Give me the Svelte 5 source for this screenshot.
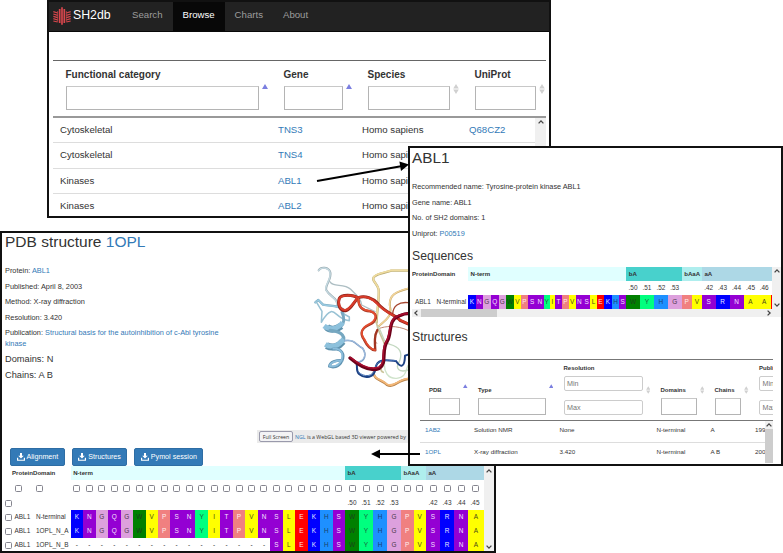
<script>
  const palette = {
    K: ['#0000ff', '#e4e8ff'], R: ['#0000ff', '#e4e8ff'],
    N: ['#9400d3', '#f6e2ff'], Q: ['#9400d3', '#f6e2ff'], S: ['#9400d3', '#f6e2ff'], T: ['#9400d3', '#f6e2ff'],
    G: ['#dda0dd', '#4a384a'], W: ['#008000', '#1c401c'],
    V: ['#ffff00', '#4a4a18'], I: ['#ffff00', '#4a4a18'], L: ['#ffff00', '#4a4a18'], A: ['#ffff00', '#4a4a18'],
    P: ['#f08080', '#fff0f0'], Y: ['#00ff7f', '#1c5c3c'], E: ['#ff0000', '#ffe4e4'], H: ['#1e90ff', '#1c3f6c'],
    '-': ['#ffffff', '#333333']
  };

  const seq = 'KNGQGWVPSNYITPVNSLEKHS' + 'WYHG' + 'PV' + 'SRNA';
  const fullWidths = [...Array(22).fill(12.47), 14, 14, 14, 14, 12.5, 12.5, 14, 14, 14, 16];
  const alignRows = [
    { domain: 'N-terminal', seq },
    { domain: '1OPL_N_A', seq },
    { domain: '1OPL_N_B', seq: '-'.repeat(16) + seq.slice(16) }
  ];
  const numbers = { 22: '.50', 23: '.51', 24: '.52', 25: '.53', 28: '.42', 29: '.43', 30: '.44', 31: '.45', 32: '.46' };

  const edges = [204, 227, 249, 272, 296, 318, 343, 362, 385, 408, 431, 450, 465, 486, 507, 527, 549, 571, 591, 612, 636, 658, 679, 720, 762, 804, 845, 876, 906, 947, 989, 1031, 1073, 1113, 1117];
  const compactSeq = (seq + 'A').split('');
  const compactWidths = edges.slice(1, 34).map((e, i) => (e - edges[i]) / 3);

  const browse = [
    ['Cytoskeletal', 'TNS3', 'Homo sapiens', 'Q68CZ2'],
    ['Cytoskeletal', 'TNS4', 'Homo sapiens', ''],
    ['Kinases', 'ABL1', 'Homo sapiens', ''],
    ['Kinases', 'ABL2', 'Homo sapiens', '']
  ];
  const browseHead = [['Functional category', true], ['Gene', true], ['Species', false], ['UniProt', false]];
  const structures = [
    ['1AB2', 'Solution NMR', 'None', 'N-terminal', 'A', '1992'],
    ['1OPL', 'X-ray diffraction', '3.420', 'N-terminal', 'A B', '2003']
  ];
  const structHead = [['PDB', 'asc'], ['Type', 'asc'], ['Resolution', 'both', true], ['Domains', 'both'], ['Chains', 'both'], ['Published', 'both', true]];
</script>

{#snippet sort(kind)}
  {#if kind === 'asc'}
    <svg class="sort" viewBox="0 0 6 10"><path d="M3 0L6 5H0Z" fill="#7b7fe0" /></svg>
  {:else}
    <svg class="sort" viewBox="0 0 6 10"><path d="M3 0L5.8 4.500H.2ZM3 10L5.8 5.500H.2Z" fill="#d0d0d0" /></svg>
  {/if}
{/snippet}

{#snippet chevron(turn)}
  <svg class="chev" viewBox="0 0 8 8" style="transform: rotate({turn}deg)"><path d="M1.6 5.4L4 2.9L6.4 5.4" fill="none" stroke="#444" stroke-width="1.3" /></svg>
{/snippet}

{#snippet download(label)}
  <button class="dl">
    <svg viewBox="0 0 16 16"><path d="M6 0h4v5.500H13.500L8 11 2.500 5.500H6Z" fill="#fff" /><path d="M1.200 9.500v5h13.600v-5" fill="none" stroke="#fff" stroke-width="2.400" /></svg>{label}
  </button>
{/snippet}

{#snippet residue(ch, w)}
  <span class="res" style="width:{w}px;background:{palette[ch][0]};color:{palette[ch][1]}">{ch}</span>
{/snippet}

<main>
  <section class="win browse">
    <nav>
      <svg class="logo" viewBox="0 0 54 54">
        <g stroke="#d9474d" fill="none">
          <path d="M20 6v42M27 1v52M34 6v42" stroke-width="5" />
          <path d="M1 14l13 4M1 21l13 4M1 28l13 4M1 35l13 4M1 42l13 3M40 18l13-4M40 25l13-4M40 32l13-4M40 39l13-4M40 45l13-3" stroke-width="3.500" />
          <path d="M14 12v32M40 12v32" stroke-width="2" />
        </g>
      </svg>
      <b>SH2db</b>
      <a>Search</a><a class="on">Browse</a><a>Charts</a><a>About</a>
    </nav>
    <div class="btable">
      <div class="bgrid bhead">
        {#each browseHead as [label, asc]}
          <div class="bth">
            <strong>{label}</strong>
            <div class="filter"><i class="box"></i>{@render sort(asc ? 'asc' : 'both')}</div>
          </div>
        {/each}
      </div>
      <div class="bbody">
        <div class="brows">
          {#each browse as row}
            <div class="bgrid brow">
              {#each row as cell, i}<span class:link={i % 2 === 1}>{cell}</span>{/each}
            </div>
          {/each}
        </div>
        <div class="vbar">{@render chevron(0)}</div>
      </div>
    </div>
  </section>

  <section class="win pdb">
    <div class="top">
      <div class="info">
        <h1>PDB structure <span class="link">1OPL</span></h1>
        <p>Protein: <span class="link">ABL1</span></p>
        <p>Published: April 8, 2003</p>
        <p>Method: X-ray diffraction</p>
        <p>Resolution: 3.420</p>
        <p>Publication: <span class="link">Structural basis for the autoinhibition of c-Abl tyrosine kinase</span></p>
        <p class="big">Domains: N</p>
        <p class="big">Chains: A B</p>
      </div>
      <div class="viewer">
        <svg class="protein" viewBox="0 24 474 591" fill="none" stroke-linecap="round" stroke-linejoin="round">
          <!-- pale loops behind the fold -->
          <path d="M474 137H424C400 145 385 145 374 154C360 165 384 176 386 194C388 225 380 262 380 292" stroke="#b8aa72" stroke-width="7" />
          <path d="M474 136H424C400 143 385 144 374 153C360 165 384 176 386 194C388 225 379 262 379 292" stroke="#efdca0" stroke-width="5" />
          <path d="M474 191C440 199 415 210 420 245C428 275 403 288 386 304" stroke="#c5a969" stroke-width="6" />
          <path d="M474 190C440 198 415 210 419 245C427 275 403 288 386 303" stroke="#f2d49a" stroke-width="4" />
          <path d="M474 233C446 230 429 243 428 267" stroke="#a6462f" stroke-width="4" />
          <path d="M474 316C440 300 405 303 386 311C370 324 371 345 380 355" stroke="#c08570" stroke-width="3" />
          <path d="M379 292C385 330 402 340 405 365C409 400 380 435 400 442" stroke="#cbc59c" stroke-width="5" />
          <path d="M384 305C402 330 396 352 420 358C450 366 459 383 448 410C434 430 448 444 474 435" stroke="#c3d8c0" stroke-width="4" />
          <path d="M404 410C400 440 414 462 440 460C468 456 466 440 474 421" stroke="#cfe3cb" stroke-width="4" />
          <path d="M371 444C372 466 397 464 411 480C432 490 444 465 474 462" stroke="#b9834b" stroke-width="7" />
          <path d="M371 444C372 464 397 462 411 478C432 488 444 463 474 461" stroke="#f2b778" stroke-width="5" />
          <!-- light blue coil -->
          <path d="M206 136C213 124 236 126 241 142C246 163 224 180 229 196C240 216 265 218 262 245" stroke="#93a6ad" stroke-width="6" />
          <path d="M206 136C213 125 235 127 240 142C245 163 223 180 228 195C239 216 264 218 261 245" stroke="#c5d9e0" stroke-width="4.500" />
          <path d="M238 168C250 190 280 172 302 193C319 210 332 218 335 240L375 260" stroke="#adbec3" stroke-width="4" />
          <path d="M196 232L205 225L219 239C240 244 262 240 278 252L280 270" stroke="#7aa9bf" stroke-width="7" />
          <path d="M196 232L205 225L219 239C240 244 262 240 278 252L280 270" stroke="#9acbe2" stroke-width="4.500" />
          <path d="M198 229L216 259L214 292C222 278 232 262 243 260C258 257 262 282 298 287V276L280 266" stroke="#98c2d4" stroke-width="4.500" />
          <path d="M276 262C285 280 282 297 272 305" stroke="#78a8c0" stroke-width="9" />
          <path d="M230 306C240 316 260 314 273 303" stroke="#5f92ad" stroke-width="21" stroke-linecap="butt" />
          <path d="M222 303C240 317 264 312 278 292" stroke="#8dc1dc" stroke-width="15" stroke-linecap="butt" />
          <path d="M240 316C265 318 288 328 279 350" stroke="#75a7c0" stroke-width="10" />
          <path d="M230 362C249 372 268 363 278 350" stroke="#5f92ad" stroke-width="21" stroke-linecap="butt" />
          <path d="M226 358C246 371 267 361 281 342" stroke="#8dc1dc" stroke-width="15" stroke-linecap="butt" />
          <path d="M248 372C276 370 285 388 276 407C267 428 248 428 238 424C240 411 258 405 277 406" stroke="#5f93b2" stroke-width="8" />
          <path d="M250 371C274 369 282 388 274 406C265 425 248 426 239 423C242 412 258 406 275 407" stroke="#8bbddb" stroke-width="5.500" />
          <path d="M285 347C315 343 318 360 338 370C350 388 347 409 320 413" stroke="#7d9cc2" stroke-width="5" />
          <path d="M285 346C315 342 318 359 338 369C349 387 346 407 322 411" stroke="#a2c0e2" stroke-width="3" />
          <!-- dark blue strand -->
          <path d="M315 412C328 415 313 434 328 448C345 462 374 459 376 430C382 400 406 405 438 408C451 428 464 430 465 392L474 389" stroke="#1d4284" stroke-width="6" />
          <path d="M325 441C342 458 370 456 375 430C382 402 406 406 438 407" stroke="#4470b4" stroke-width="3" />
          <!-- red ribbons -->
          <path d="M324 219C310 208 274 207 268 220C262 238 269 258 287 257C303 254 310 232 325 218C345 210 370 220 383 235C405 262 436 270 450 286L474 297" stroke="#8f2018" stroke-width="9" />
          <path d="M324 219C310 209 274 208 268 221C264 238 270 256 286 255C302 252 310 232 325 217C345 211 369 221 382 236C404 262 435 270 450 285L474 296" stroke="#d63b2a" stroke-width="6.500" />
          <path d="M325 222C325 248 340 258 360 259C388 266 380 290 357 300C335 310 328 325 342 344C350 361 360 374 376 376C374 349 373 333 382 315" stroke="#a23522" stroke-width="7" />
          <path d="M325 222C325 246 340 256 360 258C386 266 378 288 356 298C334 308 329 325 344 344C351 360 361 372 375 375" stroke="#e24d30" stroke-width="5.500" />
          <path d="M300 399C330 425 363 440 388 430C413 414 392 377 412 348C426 324 414 285 445 274C460 268 464 265 474 266" stroke="#6c0019" stroke-width="10" />
          <path d="M302 398C332 422 363 436 387 426C410 411 390 376 410 347C424 323 413 284 445 272C460 266 464 264 474 265" stroke="#a50c2d" stroke-width="5" />
        </svg>
        <div class="ngl"><button>Full Screen</button><span><em class="link">NGL</em> is a WebGL based 3D viewer powered by</span></div>
      </div>
    </div>
    <div class="actions">
      {@render download('Alignment')}{@render download('Structures')}{@render download('Pymol session')}
    </div>
    <div class="align">
      <div class="grow">
        <div class="line h14">
          <div class="lead names">ProteinDomain</div>
          <div class="seg nterm" style="width:274.300px">N-term</div><div class="seg ba" style="width:56px">bA</div><div class="seg baaa" style="width:25px">bAaA</div><div class="seg aa" style="width:58px">aA</div>
        </div>
        <div class="line checks">
          <div class="lead two"><i class="cb"></i><i class="cb"></i></div>
          {#each fullWidths as w, i}<span class="res" style="width:{i === 31 ? 14 : w}px"><i class="cb"></i></span>{/each}
        </div>
        <div class="line nums">
          <div class="lead row"><i class="cb"></i></div>
          {#each fullWidths as w, i}<span class="res" style="width:{i === 31 ? 14 : w}px">{numbers[i] ?? ''}</span>{/each}
        </div>
        {#each alignRows as r}
          <div class="line h14">
            <div class="lead row"><i class="cb"></i><span class="p">ABL1</span><span>{r.domain}</span></div>
            {#each r.seq.split('') as ch, i}{@render residue(ch, fullWidths[i])}{/each}
          </div>
        {/each}
      </div>
      <div class="vbar">{@render chevron(0)}{@render chevron(180)}</div>
    </div>
  </section>

  <section class="win gene">
    <h1>ABL1</h1>
    <p>Recommended name: Tyrosine-protein kinase ABL1</p>
    <p>Gene name: ABL1</p>
    <p>No. of SH2 domains: 1</p>
    <p>Uniprot: <span class="link">P00519</span></p>
    <h2>Sequences</h2>
    <div class="seqs">
      <div class="grow">
        <div class="line h14">
          <div class="lead names">ProteinDomain</div>
          <div class="seg nterm" style="width:158.300px">N-term</div><div class="seg ba" style="width:55.400px">bA</div><div class="seg baaa" style="width:20.300px">bAaA</div><div class="seg aa" style="width:70.300px">aA</div>
        </div>
        <div class="line h14">
          <div class="lead"></div>
          {#each compactWidths as w, i}<span class="res" style="width:{w}px">{numbers[i] ?? ''}</span>{/each}
        </div>
        <div class="line h14">
          <div class="lead row"><span class="p">ABL1</span><span>N-terminal</span></div>
          {#each compactSeq as ch, i}{@render residue(ch, compactWidths[i])}{/each}
          <span class="res red"></span>
        </div>
      </div>
      <div class="vbar">{@render chevron(0)}{@render chevron(180)}</div>
    </div>
    <div class="hbar">{@render chevron(-90)}<i></i>{@render chevron(90)}</div>
    <h2 class="st">Structures</h2>
    <div class="stable">
      <div class="sgrid shead">
        {#each structHead as [label, kind, range]}
          <div class="sth">
            <div class="fields">
              <strong>{label}</strong>
              {#if range}<i class="range">Min</i><i class="range last">Max</i>{:else}<i class="box"></i>{/if}
            </div>
            <div class="arrow {kind}">{@render sort(kind)}</div>
          </div>
        {/each}
      </div>
      <div class="sbody">
        <div class="srows">
          {#each structures as row}
            <div class="sgrid srow">{#each row as c, i}<span class:link={i === 0}>{c}</span>{/each}</div>
          {/each}
        </div>
        <div class="vbar">{@render chevron(0)}<i></i></div>
      </div>
    </div>
  </section>

  <svg class="arrows" viewBox="0 0 783 553">
    <path d="M317 181L401 166.200M420 454H380" stroke="#000" stroke-width="2" fill="none" />
    <path d="M409 164.600L399.400 161.600L401 170.900ZM371 454L380 449.600V458.400Z" fill="#000" />
  </svg>
</main>

<style>
  main { position: relative; width: 783px; height: 553px; overflow: hidden; background: #fff; color: #333; font-family: "Liberation Sans", Arial, sans-serif; }
  main :global(*) { box-sizing: border-box; }
  i, em { font-style: normal; }
  .win { position: absolute; background: #fff; border: 2px solid #111; overflow: hidden; }
  .browse { left: 47px; top: 0; width: 504px; height: 218px; }
  .pdb { left: 0; top: 231px; width: 496px; height: 322px; }
  .gene { left: 408px; top: 146px; width: 375px; height: 320px; }
  .link { color: #337ab7; }
  .arrows { position: absolute; inset: 0; pointer-events: none; }
  .sort { width: 6px; height: 10px; display: block; flex: none; }
  .chev { width: 8px; height: 8px; display: block; flex: none; }
  .vbar { background: #f0f0f0; display: flex; flex-direction: column; justify-content: space-between; align-items: center; flex: none; }
  .box { border: 1px solid #b4b4b4; border-top-color: #c8c8c8; background: #fff; display: block; }

  nav { height: 30px; background: #222; border-bottom: 1px solid #080808; display: flex; line-height: 26px; font-size: 9.650px; padding-left: 4px; }
  .logo { width: 18px; height: 18px; margin-top: 5px; }
  nav b { font-weight: 400; font-size: 12.300px; color: #fff; margin-left: 2px; width: 49px; }
  nav a { color: #9d9d9d; padding: 0 10px; height: 29px; }
  nav a.on { background: #080808; color: #fff; }
  .btable { margin: 28px 3px 0 4px; }
  .bgrid { display: grid; grid-template-columns: 218px 84px 107px 84px; }
  .bhead { height: 58px; border-top: 1px solid #666; border-bottom: 2px solid #999; }
  .bth { padding: 7px 1px 0 12.500px; font-size: 10px; line-height: 14px; }
  .bth:nth-child(-n+3) { padding-right: 3px; }
  .bth strong { display: block; }
  .filter { display: flex; gap: 3px; margin-top: 4px; }
  .filter .box { flex: 1; height: 24px; }
  .filter .sort { margin-top: -2px; }
  .bbody { display: flex; }
  .brows { width: 482px; height: 102px; overflow: hidden; }
  .brow { height: 25.400px; line-height: 24px; font-size: 9.650px; border-bottom: 1px solid #ddd; padding-left: 7px; }
  .bbody .vbar { width: 11px; height: 100px; }

  h1 { font-size: 15.500px; font-weight: 400; line-height: 18px; margin: 0 0 15.300px; }
  p { font-size: 7.350px; line-height: 10.400px; margin: 0 0 5.100px; }
  .top { display: flex; height: 215px; }
  .info { width: 248px; padding: 0 26px 0 3px; flex: none; }
  .big { font-size: 9.250px; }
  .viewer { display: flex; flex-direction: column; }
  .protein { width: 158px; height: 197px; display: block; }
  .ngl { margin-left: 7px; width: 160px; height: 13px; background: #ebebeb; display: flex; align-items: center; padding-left: 2px; font-size: 5.250px; white-space: nowrap; gap: 2px; font-family: "Open Sans", sans-serif; }
  .ngl button { width: 34px; height: 11px; padding: 0; border: 1px solid #9a9aac; border-radius: 2px; background: #f3f3f5; color: #333; font: inherit; }
  .actions { display: flex; gap: 7px; padding-left: 8px; height: 18px; }
  .dl { display: flex; align-items: center; gap: 2px; background: #337ab7; border: 1px solid #2e6da4; border-radius: 2px; color: #fff; font: 7.150px "Liberation Sans", Arial, sans-serif; padding: 0 5.500px; }
  .dl svg { width: 8px; height: 8px; }

  .align, .seqs { display: flex; font-size: 6.450px; }
  .grow { flex: none; overflow: hidden; }
  .align .grow { width: 482px; }
  .align .vbar { width: 10px; height: 86px; padding: 1px 0; }
  .line { display: flex; align-items: stretch; }
  .h14 { height: 14px; line-height: 14px; }
  .checks { height: 16px; align-items: center; }
  .nums { height: 14px; line-height: 14px; }
  .lead { width: 68.700px; flex: none; white-space: nowrap; display: flex; align-items: center; }
  .names, .seg { font-weight: 700; font-size: 6.100px; }
  .seg { padding-left: 2.500px; flex: none; white-space: nowrap; overflow: hidden; }
  .align .names { padding-left: 10px; }
  .two { padding-left: 12.500px; gap: 14.500px; }
  .row { padding-left: 3px; gap: 2.500px; }
  .row .p { width: 19px; }
  .nterm { background: #e0ffff; }
  .ba { background: #48d1cc; }
  .baaa { background: #afeeee; }
  .aa { background: #add8e6; }
  .res { display: flex; justify-content: center; align-items: center; flex: none; }
  .cb { width: 7px; height: 7px; border: 1px solid #85858f; border-radius: 1.500px; background: #fff; display: block; flex: none; }

  .gene { padding-left: 2px; }
  .gene h1 { margin: 1px 0 15px; font-size: 15.300px; }
  .gene p { font-size: 7.300px; }
  .gene h2 { font-size: 12.200px; font-weight: 400; line-height: 14px; margin: 10px 0 4px; }
  .gene .lead { width: 56px; }
  .gene .row { padding-left: 3px; }
  .gene .grow { width: 360px; }
  .red { width: 2px; background: red; }
  .seqs .vbar { width: 9px; height: 42px; }
  .hbar { width: 369px; height: 8px; background: #f0f0f0; display: flex; padding-right: 8px; }
  .hbar i { width: 76px; background: #cdcdcd; margin: 0 auto 0 1px; }
  .gene .st { margin: 13px 0 15px; }
  .stable { width: 353px; margin-left: 8px; overflow: hidden; }
  .sgrid { display: grid; grid-template-columns: 49px 85.500px 97px 54px 44.500px 90px; }
  .shead { height: 62px; border-top: 1px solid #777; border-bottom: 1px solid #777; }
  .sth { display: flex; padding: 0 0 5px 9px; align-items: flex-end; font-size: 6px; }
  .fields { flex: 1; display: flex; flex-direction: column; }
  .fields strong { line-height: 8px; margin-bottom: 4px; }
  .fields .box { height: 17px; }
  .range { border: 1px solid #ccc; border-radius: 2px; height: 15px; line-height: 13px; font-size: 7.200px; color: #777; padding-left: 2.500px; }
  .range.last { margin-top: 9px; }
  .arrow { width: 9px; padding-left: 3px; flex: none; }
  .arrow.both { height: 29px; }
  .arrow.asc { height: 31px; }
  .arrow .sort { width: 4.500px; height: 8px; }
  .sbody { display: flex; }
  .srows { width: 345px; height: 45px; overflow: hidden; }
  .srow { height: 22.500px; line-height: 17px; font-size: 6.250px; border-bottom: 1px solid #ddd; padding-left: 5px; }
  .sbody .vbar { width: 8px; height: 42px; }
  .sbody .vbar i { flex: 1; width: 8px; background: #cdcdcd; }
</style>
